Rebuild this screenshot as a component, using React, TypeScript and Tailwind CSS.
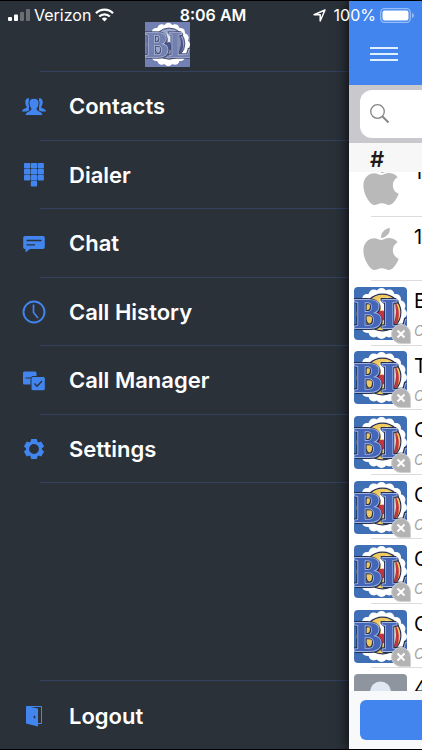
import { useState } from 'react'
import type { ReactNode } from 'react'
import { FaApple } from 'react-icons/fa'

const ContactsIcon = () => (
  <svg className="w-6 h-5" viewBox="0 0 24 20" fill="#4285ee">
    <path d="M7.500 1C4.500 1 3 3 3.300 5.700c.2 2 1 3.300 1.500 4.300C4.800 11.500 0 11.500 0 14.500h7V1Z" />
    <path d="M16.500 1c3 0 4.500 2 4.200 4.700-.2 2-1 3.300-1.500 4.300 0 1.500 4.800 1.500 4.800 4.500h-7V1Z" />
    <path
      d="M12 1.300c-3.600 0-5.400 2.500-5 5.700.3 2.300 1.400 3.900 2 4.900.2 2.300-6 2-6 6.700h18c0-4.700-6.200-4.400-6-6.700.6-1 1.700-2.600 2-4.900.4-3.200-1.400-5.700-5-5.700Z"
      stroke="#2a3139"
      strokeWidth="1"
    />
  </svg>
)

const DialerIcon = () => (
  <svg className="w-5 h-6" viewBox="0 0 20 24" fill="#4285ee">
    {[0, 6.8, 13.6].map((x) =>
      [0, 6, 12].map((y) => <rect key={`${x}-${y}`} x={x} y={y} width="6.300" height="5.500" rx="0.800" />)
    )}
    <rect x="6.800" y="18" width="6.300" height="5.500" rx="0.800" />
  </svg>
)

const ChatIcon = () => (
  <svg className="w-6 h-5" viewBox="0 0 24 20">
    <path d="M3 2h18a1.800 1.800 0 0 1 1.800 1.800v9.400A1.800 1.800 0 0 1 21 15H8l-4.500 3.500V15H3a1.800 1.800 0 0 1-1.800-1.800V3.800A1.800 1.800 0 0 1 3 2Z" fill="#4285ee" />
    <path d="M4.500 6.500h15M4.500 10.800h8.500" stroke="#2a3139" strokeWidth="1.300" />
  </svg>
)

const HistoryIcon = () => (
  <svg className="w-6 h-6" viewBox="0 0 24 24" fill="none" stroke="#4285ee">
    <circle cx="12" cy="12" r="10.500" strokeWidth="1.900" />
    <path d="M11.500 4.500v8l4.500 5.500" strokeWidth="1.700" />
  </svg>
)

const ManagerIcon = () => (
  <svg className="w-6 h-5" viewBox="0 0 24 20">
    <rect x="1" y="0.500" width="13.500" height="13" rx="1.500" fill="#4285ee" />
    <path d="M3.500 7h6" stroke="#2a3139" strokeWidth="1" />
    <rect x="9" y="5.500" width="14.300" height="14.300" rx="2" fill="#4285ee" stroke="#2a3139" strokeWidth="1" />
    <path d="m12.500 12.500 2.500 2.700 5-5.200" fill="none" stroke="#2a3139" strokeWidth="1.300" />
  </svg>
)

const SettingsIcon = () => (
  <svg className="w-5 h-5" viewBox="0 0 20 20">
    <circle cx="10" cy="10" r="6.500" fill="none" stroke="#4285ee" strokeWidth="3.200" />
    {[0, 60, 120, 180, 240, 300].map((angle) => (
      <path key={angle} d="M7.200 0h5.600l.8 3.500H6.400Z" fill="#4285ee" transform={`rotate(${angle} 10 10)`} />
    ))}
  </svg>
)

const LogoutIcon = () => (
  <svg className="w-5 h-6" viewBox="0 0 20 24">
    <path d="M3 2.500h14.500v17H13" fill="none" stroke="#4285ee" strokeWidth="1" />
    <path d="M2 2l12 2.500v18L2 19.500Z" fill="#4285ee" />
    <ellipse cx="10.500" cy="13" rx="0.900" ry="1.500" fill="#22304a" />
  </svg>
)

interface LogoProps {
  className: string
  muted?: boolean
}

const Logo = ({ className, muted = false }: LogoProps) => {
  const blue = muted ? '#7380b4' : '#3f6fb5'
  const letters = muted ? '#7280b0' : '#4566b8'
  const light = muted ? '#b4bddc' : '#9fb4e0'
  const dark = muted ? '#3e466c' : '#26304f'
  const red = muted ? '#4b568b' : '#c3343f'
  const puffs = Array.from({ length: 16 }, (_, i) => (i * Math.PI) / 8)
  return (
    <svg className={className} viewBox="0 0 52 52" role="img" aria-label="BL logo">
      <rect width="52" height="52" fill={blue} />
      <circle cx="27" cy="26" r="23" fill="#fff" />
      {puffs.map((a) => (
        <circle key={a} cx={27 + 20 * Math.cos(a)} cy={26 + 20 * Math.sin(a)} r="5" fill="#fff" />
      ))}
      <circle cx="28" cy="25" r="18" fill={muted ? '#9ba6cc' : '#f0c95f'} stroke={dark} strokeWidth="1.100" />
      <path d="M25 12l8-2 7 8 2 12-4 8-10-5Z" fill={muted ? '#e6e9f5' : '#fff'} />
      <path d="M40 14c4 5 5 13 3 20l-5 5c3-8 4-16 2-25Z" fill={red} />
      <path d="M36 11c3 7 3 14 1 20l-4-5c2-5 3-10 3-15Z" fill={muted ? '#5c689a' : '#334d94'} />
      <path d="M22 24l7-1 3 9-8 2Z" fill={red} />
      <text
        x="0"
        y="40"
        fontFamily="'Liberation Serif', serif"
        fontWeight="700"
        fontSize="41"
        fill={letters}
        stroke={light}
        strokeWidth="1.800"
        strokeLinejoin="round"
        paintOrder="stroke"
        style={{ filter: `drop-shadow(1px 1px 0 ${dark}) drop-shadow(-0.5px -0.5px 0 ${dark})` }}
      >
        BL
      </text>
    </svg>
  )
}

const StatusBar = () => (
  <div className="pointer-events-none absolute inset-x-0 top-0 z-20 flex h-7 items-center justify-between px-2 text-base leading-7 text-white">
    <div className="flex flex-1 items-center">
      <svg className="mr-1 h-3 w-[22px]" viewBox="0 0 22 12" fill="#fff">
        <rect x="0" y="8" width="4" height="4" rx="1" />
        <rect x="6" y="5.500" width="4" height="6.500" rx="1" />
        <rect x="12" y="3" width="4" height="9" rx="1" opacity="0.300" />
        <rect x="18" y="0" width="4" height="12" rx="1" opacity="0.300" />
      </svg>
      <span>Verizon</span>
      <svg className="ml-1 h-[14px] w-[19px]" viewBox="0 0 19 14" fill="none" stroke="#fff" strokeWidth="2.300">
        <path d="M1 5.200a12 12 0 0 1 17 0" />
        <path d="M4.200 8.500a7.500 7.500 0 0 1 10.600 0" />
        <path d="M9.500 13.500 6.800 10.800a3.800 3.800 0 0 1 5.400 0Z" fill="#fff" stroke="none" />
      </svg>
    </div>
    <span className="pl-1 text-base font-semibold">8:06 AM</span>
    <div className="flex flex-1 items-center justify-end">
      <svg className="mr-2 h-[13px] w-[13px]" viewBox="0 0 13 13" fill="none" stroke="#fff" strokeWidth="1.500" strokeLinejoin="round">
        <path d="M12 1 1 5.800h6.200V12Z" />
      </svg>
      <span>100%</span>
      <svg className="ml-1 h-[15px] w-[34px]" viewBox="0 0 34 15">
        <rect x="0.700" y="0.700" width="29.600" height="13.600" rx="3.800" fill="none" stroke="#fff" strokeOpacity="0.450" strokeWidth="1.300" />
        <rect x="2.500" y="2.500" width="26" height="10" rx="2" fill="#fff" />
        <path d="M32 5c2.400 1 2.400 4 0 5Z" fill="#fff" opacity="0.500" />
      </svg>
    </div>
  </div>
)

interface MenuItemProps {
  label: string
  icon: ReactNode
}

const MenuItem = ({ label, icon }: MenuItemProps) => (
  <button className="flex h-full w-full items-center pl-[22px] pt-0.5 text-left text-[22px] font-semibold text-white">
    <span className="mr-[23px] flex w-6 justify-center">{icon}</span>
    {label}
  </button>
)

const menu: MenuItemProps[] = [
  { label: 'Contacts', icon: <ContactsIcon /> },
  { label: 'Dialer', icon: <DialerIcon /> },
  { label: 'Chat', icon: <ChatIcon /> },
  { label: 'Call History', icon: <HistoryIcon /> },
  { label: 'Call Manager', icon: <ManagerIcon /> },
  { label: 'Settings', icon: <SettingsIcon /> },
]

interface Contact {
  name: string
  status?: string
  avatar: 'apple' | 'logo' | 'person'
}

const contacts: Contact[] = [
  { name: '1', avatar: 'apple' },
  { name: '1', avatar: 'apple' },
  { name: 'B', status: 'O', avatar: 'logo' },
  { name: 'T', status: 'O', avatar: 'logo' },
  { name: 'C', status: 'O', avatar: 'logo' },
  { name: 'C', status: 'O', avatar: 'logo' },
  { name: 'C', status: 'O', avatar: 'logo' },
  { name: 'C', status: 'O', avatar: 'logo' },
  { name: '4', avatar: 'person' },
]

const Avatar = ({ type }: { type: Contact['avatar'] }) => {
  if (type === 'apple') {
    return (
      <div className="flex h-[53px] w-[53px] items-center justify-center">
        <FaApple className="h-12 w-9 text-[#b9b9b9]" />
      </div>
    )
  }
  if (type === 'person') {
    return (
      <svg className="h-[53px] w-[53px] rounded" viewBox="0 0 53 53">
        <rect width="53" height="53" fill="#8f959f" />
        <circle cx="26.500" cy="18" r="10.500" fill="#dfe8f3" />
        <path d="M6 53c0-14 8-20 20.500-20S47 39 47 53Z" fill="#dfe8f3" />
      </svg>
    )
  }
  return (
    <div className="relative h-[53px] w-[53px]">
      <Logo className="h-[53px] w-[53px] rounded" />
      <svg className="absolute -bottom-1 -right-1 h-5 w-5" viewBox="0 0 20 20">
        <path d="M10 .5a9.500 9.500 0 0 1 9.500 9.500v9.500H10a9.500 9.500 0 0 1 0-19Z" fill="#b3b3b3" stroke="#d2d2d2" />
        <path d="m6.500 6.500 7 7m0-7-7 7" stroke="#fff" strokeWidth="2" />
      </svg>
    </div>
  )
}

const ContactRow = ({ name, status, avatar }: Contact) => (
  <li className="flex items-center pl-[5px]">
    <Avatar type={avatar} />
    <div className="-ml-9 h-full flex-1 border-b border-[#dcdcde] pl-[43px] pt-2">
      <div className="text-xl leading-6 text-black">{name}</div>
      {status && <div className="pt-1 text-sm leading-7 italic text-[#a3a3a3]">{status}</div>}
    </div>
  </li>
)

const App = () => {
  const [query, setQuery] = useState('')

  return (
    <div className="relative flex h-screen overflow-hidden border-t border-b border-black bg-[#2a3139] font-[Inter,'Liberation_Sans',sans-serif]">
      <StatusBar />

      <aside className="flex min-w-0 flex-1 flex-col">
        <header className="flex h-[70px] items-start pt-[21px]">
          <div className="flex w-full justify-center pr-[14px]">
            <Logo muted className="h-[45px] w-[45px]" />
          </div>
        </header>
        <div className="ml-10 h-px bg-[#34415f]" />
        <nav className="flex flex-1 flex-col justify-between">
          <ul className="grid h-[411px] grid-rows-6">
            {menu.map((item) => (
              <li key={item.label} className="flex flex-col">
                <div className="min-h-0 flex-1">
                  <MenuItem {...item} />
                </div>
                <div className="ml-10 h-px bg-[#34415f]" />
              </li>
            ))}
          </ul>
          <div>
            <div className="ml-10 h-px bg-[#34415f]" />
            <div className="h-[68px]">
              <MenuItem label="Logout" icon={<LogoutIcon />} />
            </div>
          </div>
        </nav>
      </aside>

      <main className="z-10 flex w-[73px] shrink-0 flex-col overflow-hidden bg-white shadow-[-2px_0_12px_rgba(0,0,0,0.7)]">
        <header className="flex h-[84px] shrink-0 items-end bg-[#4285ee] pb-[24px] pl-[21px]">
          <button aria-label="Menu" className="flex w-7 flex-col gap-1">
            <span className="h-0.5 bg-[#dff0ff]" />
            <span className="h-0.5 bg-[#dff0ff]" />
            <span className="h-0.5 bg-[#dff0ff]" />
          </button>
        </header>
        <div className="h-[58px] shrink-0 bg-[#c9c8cd] pl-[11px] pt-[5px]">
          <label className="flex h-12 items-center rounded-l-xl bg-white pl-2">
            <svg className="h-6 w-6 shrink-0" viewBox="0 0 24 24" fill="none" stroke="#858585">
              <circle cx="9.500" cy="9.500" r="6.800" strokeWidth="1.300" />
              <path d="m14.500 14.500 6 6" strokeWidth="2" />
            </svg>
            <input
              aria-label="Search"
              className="min-w-0 flex-1 bg-transparent outline-none"
              value={query}
              onChange={(e) => setQuery(e.target.value)}
            />
          </label>
        </div>
        <h2 className="h-[29px] shrink-0 bg-[#f7f7f7] pl-[21px] text-[22px] leading-8 font-semibold text-[#1c1c1c]">#</h2>
        <div className="min-h-0 flex-1 overflow-hidden">
          <ul className="-mt-5 grid h-[581px] grid-rows-9">
            {contacts.map((contact, i) => (
              <ContactRow key={i} {...contact} />
            ))}
          </ul>
        </div>
        <footer className="h-[58px] shrink-0 bg-[#f8f9fa] pl-[11px] pt-[9px]">
          <button aria-label="Add contact" className="h-10 w-full rounded-l-md bg-[#4285ee]" />
        </footer>
      </main>
    </div>
  )
}

export default App
